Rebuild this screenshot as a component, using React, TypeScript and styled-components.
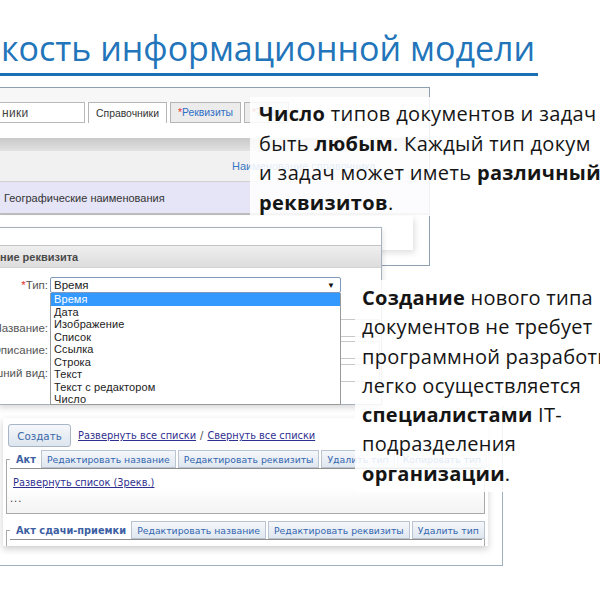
import React from "react";
import styled, { createGlobalStyle } from "styled-components";

const Global = createGlobalStyle`
  *, *::before, *::after { box-sizing: border-box; }
  html, body { margin: 0; padding: 0; background: #fff; }
  #root { width: 600px; height: 600px; }
`;

const Slide = styled.div`
  position: relative;
  width: 600px;
  height: 600px;
  overflow: hidden;
  background: #fff;
  font-family: "Open Sans", "Noto Sans", sans-serif;
`;

const TitleBlock = styled.header`
  padding-top: 28px;
  display: flex;
  flex-direction: column;
  align-items: flex-start;
`;

const Title = styled.h1`
  margin: 0;
  font-weight: 400;
  font-size: 34px;
  line-height: 40px;
  color: #2275ba;
  white-space: nowrap;
  padding-left: 1px;
`;

const TitleRule = styled.div`
  margin-top: 5px;
  width: 538px;
  height: 3px;
  background: #1b6fb5;
`;

/* ---------- Screenshot 1: directories ---------- */
const DirFrame = styled.section`
  position: absolute;
  left: 0;
  top: 87px;
  width: 430px;
  height: 179px;
  border-top: 1px solid #8e9fb2;
  border-right: 1px solid #8e9fb2;
  border-bottom: 1px solid #8e9fb2;
  background: #fff;
  display: flex;
  flex-direction: column;
  font-family: "Liberation Sans", Arial, sans-serif;
`;

const DirTopStrip = styled.div`
  height: 14px;
  background: #f7f7f7;
`;

const DirTabs = styled.div`
  height: 21px;
  display: flex;
  align-items: stretch;
  gap: 3px;
`;

const SearchBox = styled.div`
  width: 86px;
  margin-left: -1px;
  border: 1px solid #b9b9b9;
  background: #fff;
  font-size: 12px;
  color: #444;
  padding-left: 2px;
  display: flex;
  align-items: center;
  letter-spacing: 0.3px;
`;

const Tab = styled.div<{ $active?: boolean }>`
  display: flex;
  align-items: center;
  padding: 0 7px;
  border: 1px solid #b5b5b5;
  border-bottom: ${(p) => (p.$active ? "none" : "1px solid #b5b5b5")};
  background: ${(p) => (p.$active ? "#fff" : "#ececec")};
  color: ${(p) => (p.$active ? "#333" : "#2f6fc6")};
  font-size: 10.4px;
  white-space: nowrap;
`;

const Req = styled.span`
  color: #e03030;
`;

const DirGap = styled.div`
  height: 15px;
  background: #fff;
`;

const DirBand = styled.div`
  height: 13px;
  background: linear-gradient(#c9c9c9, #e2e2e2);
`;

const DirHead = styled.div`
  height: 30px;
  background: #f1f1f1;
  display: flex;
  align-items: center;
  padding-left: 232px;
  font-size: 11px;
  color: #3a77c2;
  white-space: nowrap;
`;

const DirRow = styled.div`
  height: 32px;
  border-top: 1px solid #d0d0d0;
  background: #e5e5f7;
  display: flex;
  align-items: center;
  padding-left: 4px;
  font-size: 11px;
  color: #333;
`;

const DirRowEnd = styled.div`
  height: 2px;
  background: #bdbdbd;
`;

/* ---------- Callouts ---------- */
const Callout = styled.div`
  position: absolute;
  background: rgba(255, 255, 255, 0.86);
  font-size: 20px;
  line-height: 29.5px;
  color: #151515;
  white-space: nowrap;
  overflow: hidden;
  display: flex;
  flex-direction: column;
  b {
    font-weight: 700;
  }
`;

const CalloutTop = styled(Callout)`
  left: 250px;
  top: 97px;
  width: 350px;
  height: 119px;
  padding: 2px 0 0 9px;
  letter-spacing: 0.35px;
`;

const CalloutSide = styled(Callout)`
  left: 355px;
  top: 280px;
  width: 245px;
  height: 212px;
  padding: 3px 0 0 7px;
  line-height: 29.3px;
  letter-spacing: 0.25px;
`;

/* ---------- Screenshot 2: attribute form ---------- */
const AttrBacking = styled.div`
  position: absolute;
  left: 0;
  top: 216px;
  width: 413px;
  height: 34px;
  background: #fff;
  box-shadow: 2px 3px 6px rgba(0, 0, 0, 0.12);
`;

const AttrFrame = styled.section`
  position: absolute;
  left: -1px;
  top: 227px;
  width: 383px;
  height: 178px;
  border: 1px solid #a6b1be;
  background: #fff;
  box-shadow: 0 3px 6px rgba(0, 0, 0, 0.15);
  display: flex;
  flex-direction: column;
  font-family: "Liberation Sans", Arial, sans-serif;
`;

const AttrTop = styled.div`
  height: 17px;
`;

const AttrHeader = styled.div`
  height: 23px;
  border-top: 1px solid #c4c4c4;
  border-bottom: 1px solid #d2d2d2;
  background: linear-gradient(#efefef, #dddddd);
  display: flex;
  align-items: center;
  font-size: 11px;
  font-weight: 700;
  color: #4a4a4a;
  white-space: nowrap;
`;

const FormRow = styled.div<{ $mt: number }>`
  margin-top: ${(p) => p.$mt}px;
  display: grid;
  grid-template-columns: 48px 1fr;
  column-gap: 2px;
  align-items: center;
`;

const FieldLabel = styled.div`
  display: flex;
  justify-content: flex-end;
  font-size: 11.5px;
  color: #555;
  white-space: nowrap;
`;

const SelectBox = styled.div`
  position: relative;
  width: 291px;
  height: 16px;
  border: 1px solid #7f98bb;
  border-radius: 2px;
  background: #fff;
  display: flex;
  align-items: center;
  justify-content: space-between;
  padding: 0 5px 0 3px;
  font-size: 11.5px;
  color: #222;
`;

const Arrow = styled.span`
  font-size: 8px;
  color: #111;
`;

const DropList = styled.ul`
  position: absolute;
  left: -1px;
  top: 15px;
  width: 291px;
  height: 112px;
  margin: 0;
  padding: 0;
  list-style: none;
  border: 1px solid #9a9a9a;
  border-top: none;
  background: #fff;
  overflow: hidden;
  z-index: 2;
`;

const DropItem = styled.li<{ $selected?: boolean }>`
  height: 12.5px;
  line-height: 12.5px;
  padding-left: 3px;
  font-size: 11px;
  letter-spacing: 0.1px;
  color: ${(p) => (p.$selected ? "#fff" : "#222")};
  background: ${(p) => (p.$selected ? "#3399ff" : "transparent")};
`;

const TextInput = styled.div<{ $h: number }>`
  width: 330px;
  height: ${(p) => p.$h}px;
  border: 1px solid #c8c8c8;
  background: #fff;
`;

/* ---------- Screenshot 3: document types ---------- */
const TypesOuter = styled.section`
  position: absolute;
  left: -1px;
  top: 406px;
  width: 504px;
  height: 160px;
  border-right: 1px solid #9fb0c0;
  border-bottom: 1px solid #9fb0c0;
  padding: 12px 0 0 4px;
`;

const TypesWindow = styled.div`
  width: 485px;
  height: 128px;
  background: #fff;
  box-shadow: 0 3px 7px rgba(0, 0, 0, 0.2);
  padding: 6px 0 0 3px;
  overflow: hidden;
  font-family: "DejaVu Sans", Verdana, sans-serif;
  font-size: 9.8px;
  display: flex;
  flex-direction: column;
`;

const Toolbar = styled.div`
  display: flex;
  align-items: center;
  gap: 7px;
  padding-left: 2px;
`;

const CreateButton = styled.button`
  width: 63px;
  height: 23px;
  border: 1px solid #a7b5c6;
  border-radius: 3px;
  background: linear-gradient(#f5f7fa, #dde5ee);
  color: #3a67a8;
  font-family: "DejaVu Sans", Verdana, sans-serif;
  font-size: 10.3px;
  padding: 0;
`;

const Links = styled.div`
  color: #2f2f8f;
  white-space: nowrap;
  a {
    color: #2f2f8f;
    text-decoration: underline;
  }
`;

const Slash = styled.span`
  color: #444;
  padding: 0 4px;
`;

const TypePanel = styled.fieldset<{ $mt: number }>`
  margin: ${(p) => p.$mt}px 0 0 0;
  width: 479px;
  padding: 0;
  border: 1px solid #a9a9a9;
  min-width: 0;
`;

const PanelLegend = styled.legend`
  margin-left: 3px;
  padding: 0;
  display: flex;
  align-items: center;
  height: 19px;
  border-bottom: 1px solid #8f8f8f;
  width: 472px;
`;

const PanelName = styled.span`
  padding: 0 5px 0 6px;
  font-weight: 700;
  color: #3d5fa3;
  font-size: 9.8px;
  white-space: nowrap;
`;

const PanelButton = styled.span`
  height: 18px;
  margin-right: 2px;
  padding: 0 5px;
  display: flex;
  align-items: center;
  border: 1px solid #bac4d0;
  background: linear-gradient(#f5f7fa, #e0e7f0);
  color: #3266b0;
  font-size: 9.3px;
  white-space: nowrap;
`;

const PanelBody = styled.div<{ $h: number }>`
  height: ${(p) => p.$h}px;
  display: flex;
  flex-direction: column;
  padding: 8px 0 0 6px;
  background: linear-gradient(#fff 40%, #f3f3f3);
  a {
    color: #2f2f8f;
    text-decoration: underline;
  }
`;

const Dots = styled.div`
  margin-left: -3px;
  margin-top: 5px;
  color: #333;
  letter-spacing: 1px;
`;

const dropItems = [
  "Время",
  "Дата",
  "Изображение",
  "Список",
  "Ссылка",
  "Строка",
  "Текст",
  "Текст с редактором",
  "Число",
];

export default function App() {
  return (
    <Slide>
      <Global />
      <TitleBlock>
        <Title>кость информационной модели</Title>
        <TitleRule />
      </TitleBlock>

      <DirFrame>
        <DirTopStrip />
        <DirTabs>
          <SearchBox>ники</SearchBox>
          <Tab $active>Справочники</Tab>
          <Tab>
            <Req>*</Req>Реквизиты
          </Tab>
          <Tab>
            <Req>*</Req>Типы
          </Tab>
        </DirTabs>
        <DirGap />
        <DirBand />
        <DirHead>Наименование справочника</DirHead>
        <DirRow>Географические наименования</DirRow>
        <DirRowEnd />
      </DirFrame>

      <CalloutTop>
        <span>
          <b>Число</b> типов документов и задач
        </span>
        <span>
          быть <b>любым</b>. Каждый тип докум
        </span>
        <span>
          и задач может иметь <b>различный</b>
        </span>
        <span>
          <b>реквизитов</b>.
        </span>
      </CalloutTop>

      <AttrBacking />
      <AttrFrame>
        <AttrTop />
        <AttrHeader>ние реквизита</AttrHeader>
        <FormRow $mt={9}>
          <FieldLabel>
            <span>
              <Req>*</Req>Тип:
            </span>
          </FieldLabel>
          <SelectBox>
            <span>Время</span>
            <Arrow>▼</Arrow>
            <DropList>
              {dropItems.map((it, i) => (
                <DropItem key={it} $selected={i === 0}>
                  {it}
                </DropItem>
              ))}
            </DropList>
          </SelectBox>
        </FormRow>
        <FormRow $mt={26}>
          <FieldLabel>
            <span>Название:</span>
          </FieldLabel>
          <TextInput $h={18} />
        </FormRow>
        <FormRow $mt={4}>
          <FieldLabel>
            <span>Описание:</span>
          </FieldLabel>
          <TextInput $h={18} />
        </FormRow>
        <FormRow $mt={5}>
          <FieldLabel>
            <span>шний вид:</span>
          </FieldLabel>
          <TextInput $h={18} />
        </FormRow>
      </AttrFrame>

      <TypesOuter>
        <TypesWindow>
          <Toolbar>
            <CreateButton>Создать</CreateButton>
            <Links>
              <a>Развернуть все списки</a>
              <Slash>/</Slash>
              <a>Свернуть все списки</a>
            </Links>
          </Toolbar>
          <TypePanel $mt={3}>
            <PanelLegend>
              <PanelName>Акт</PanelName>
              <PanelButton>Редактировать название</PanelButton>
              <PanelButton>Редактировать реквизиты</PanelButton>
              <PanelButton>Удалить тип</PanelButton>
              <PanelButton>Копировать тип</PanelButton>
            </PanelLegend>
            <PanelBody $h={44}>
              <a>Развернуть список (3рекв.)</a>
              <Dots>...</Dots>
            </PanelBody>
          </TypePanel>
          <TypePanel $mt={7}>
            <PanelLegend>
              <PanelName>Акт сдачи-приемки</PanelName>
              <PanelButton>Редактировать название</PanelButton>
              <PanelButton>Редактировать реквизиты</PanelButton>
              <PanelButton>Удалить тип</PanelButton>
            </PanelLegend>
            <PanelBody $h={10} />
          </TypePanel>
        </TypesWindow>
      </TypesOuter>

      <CalloutSide>
        <span>
          <b>Создание</b> нового типа
        </span>
        <span>документов не требует</span>
        <span>программной разработки</span>
        <span>легко осуществляется</span>
        <span>
          <b>специалистами</b> IT-
        </span>
        <span>подразделения</span>
        <span>
          <b>организации</b>.
        </span>
      </CalloutSide>
    </Slide>
  );
}
